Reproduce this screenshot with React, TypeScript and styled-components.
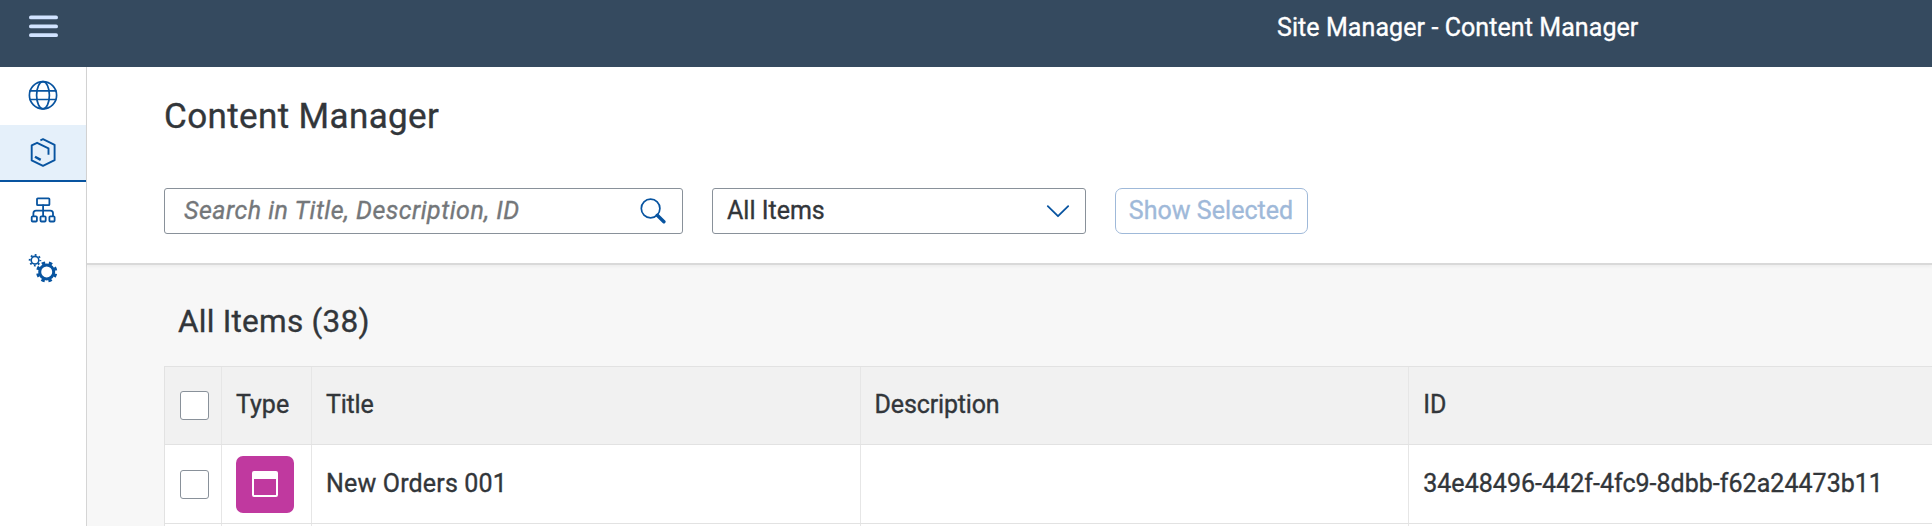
import React from "react";
import styled, { createGlobalStyle } from "styled-components";

const Global = createGlobalStyle`
  * { box-sizing: border-box; }
  body { margin: 0; background: #f7f7f7; font-family: Roboto, "Liberation Sans", sans-serif; color: #32363a; overflow: hidden; }
`;

const Page = styled.div`
  display: flex;
  flex-direction: column;
  height: 526px;
  width: 1932px;
  overflow: hidden;
`;
const Shell = styled.header`
  display: flex;
  align-items: flex-start;
  flex: 0 0 67px;
  background: #354a5f;
  color: #fff;
`;
const MenuButton = styled.button`
  display: flex;
  width: 87px;
  height: 52px;
  padding: 0 0 0 29px;
  align-items: center;
  background: none;
  border: 0;
`;
const Label = styled.span<{ $size?: number; $spacing?: number }>`
  font-size: ${(p) => p.$size ?? 25}px;
  letter-spacing: ${(p) => p.$spacing ?? 0}px;
  line-height: 1.2;
  white-space: nowrap;
  -webkit-text-stroke: 0.35px currentColor;
`;
const ShellTitle = styled.div`
  padding: 13px 0 0 1190px;
  line-height: 30px;
  display: flex;
`;
const Body = styled.div`
  display: flex;
  flex: 1;
  min-height: 0;
`;
const Sidebar = styled.nav`
  flex: 0 0 87px;
  background: #fff;
  border-right: 1px solid #d5d5d5;
`;
const NavItem = styled.a<{ $active?: boolean }>`
  display: flex;
  height: 58px;
  padding: 0 0 2px 28px;
  align-items: center;
  background: ${(p) => (p.$active ? "#e5f0fa" : "#fff")};
  box-shadow: ${(p) => (p.$active ? "inset 0 -2px #0854a0" : "none")};
  &:nth-child(even) { height: 57px; }
`;
const Main = styled.main`
  flex: 1;
  min-width: 0;
  display: flex;
  flex-direction: column;
`;
const PageHeader = styled.section`
  flex: 0 0 198px;
  padding: 29px 0 0 77px;
  background: #fff;
  border-bottom: 2px solid #d9d9d9;
  box-shadow: 0 2px 3px rgba(0, 0, 0, 0.04);
`;
const Heading = styled.h1`
  margin: 0 0 50px;
  height: 42px;
  font-weight: 400;
  display: flex;
`;
const Filters = styled.div`
  display: flex;
  height: 46px;
`;
const Field = styled.div<{ $width: number; $left: number; $right: number }>`
  display: flex;
  align-items: center;
  justify-content: space-between;
  width: ${(p) => p.$width}px;
  margin-right: 29px;
  padding: 0 ${(p) => p.$right}px 0 ${(p) => p.$left}px;
  border: 1px solid #89919a;
  border-radius: 3px;
`;
const Placeholder = styled(Label)`
  font-style: italic;
  color: #74777a;
`;
const ShowButton = styled.button`
  width: 193px;
  padding: 0 1px 0 0;
  font-family: inherit;
  color: #9fb9d9;
  background: #fff;
  border: 1px solid #9fb9d9;
  border-radius: 7px;
`;
const Content = styled.section`
  padding: 38px 0 0 77px;
`;
const TableTitle = styled.h2`
  margin: 0 0 25px;
  padding-left: 14px;
  height: 38px;
  font-weight: 400;
  display: flex;
`;
const Table = styled.div`
  border-top: 1px solid #e2e2e2;
  border-left: 1px solid #e2e2e2;
`;
const Row = styled.div<{ $head?: boolean }>`
  display: grid;
  grid-template-columns: 57px 90px 548.6px 548.6px 1fr;
  height: ${(p) => (p.$head ? 78 : 79)}px;
  background: ${(p) => (p.$head ? "#f1f1f1" : "#fff")};
  border-bottom: 1px solid #e2e2e2;
`;
const Cell = styled.div`
  display: flex;
  align-items: center;
  padding-left: 14px;
  border-right: 1px solid #e6e6e6;
  &:first-child { padding-left: 15px; }
  &:last-child { border-right: 0; }
`;
const HeadCell = styled(Cell)`
  padding-bottom: 2px;
  &:first-child { padding-bottom: 0; }
`;
const Checkbox = styled.span`
  width: 29px;
  height: 29px;
  background: #fff;
  border: 1px solid #89919a;
  border-radius: 3px;
`;
const TypeTile = styled.span`
  display: flex;
  align-items: center;
  justify-content: center;
  width: 58px;
  height: 57px;
  border-radius: 7px;
  background: #c0399f;
`;

const MenuIcon = () => (
  <svg width="29" height="24" viewBox="0 0 29 24" stroke="#d1e3ff" strokeWidth="3.8" strokeLinecap="round">
    <path d="M1.9 3.4h25.2M1.9 12.4h25.2M1.9 21.2h25.2" />
  </svg>
);
const line = { fill: "none", stroke: "#0854a0", strokeWidth: 1.7, strokeLinejoin: "round", strokeLinecap: "round" } as const;
const Globe = () => (
  <svg width="30" height="30" viewBox="0 0 30 30" {...line}>
    <circle cx="15" cy="15.3" r="13.6" />
    <ellipse cx="15" cy="15.3" rx="6.4" ry="13.6" />
    <path d="M2.2 10.8h25.6M2.2 19.5h25.6" />
  </svg>
);
const Hexagon = () => (
  <svg width="30" height="30" viewBox="0 0 30 30" {...line} strokeWidth="1.9" strokeLinecap="butt">
    <path d="M12.4 2.3 15 1.2l11.6 5.6v15.4L15 27.9 3.7 22.4V7.4l5.4-2.6 11.4 5.5v6.4" />
    <path d="m7 18.7 5.7 3.2" strokeWidth="2.4" />
  </svg>
);
const Hierarchy = () => (
  <svg width="30" height="30" viewBox="0 0 30 30" {...line} strokeWidth="1.8">
    <rect x="9" y="3.3" width="12.4" height="6.9" rx=".8" />
    <rect x="3.7" y="21.3" width="5.2" height="5.2" rx="1" />
    <rect x="12.5" y="21.3" width="5.2" height="5.2" rx="1" />
    <rect x="21.4" y="21.3" width="5.2" height="5.2" rx="1" />
    <path d="M15.1 10.2v11.1M5.4 21.2v-3q0-2.6 2.6-2.6h14.4q2.6 0 2.6 2.6v3" />
  </svg>
);
const Gears = () => (
  <svg width="30" height="30" viewBox="0 0 30 30" fill="none" stroke="#0854a0">
    <circle cx="7" cy="7.2" r="3.8" strokeWidth="1.6" />
    <circle cx="7" cy="7.2" r="5.3" strokeWidth="1.9" strokeDasharray="1.8 2.36" strokeDashoffset="0.9" />
    <circle cx="18.7" cy="18.9" r="7" strokeWidth="3" />
    <circle cx="18.7" cy="18.9" r="9.2" strokeWidth="2.8" strokeDasharray="3.5 3.726" strokeDashoffset="-1.9" />
  </svg>
);
const SearchIcon = () => (
  <svg width="26" height="26" viewBox="0 0 26 26" fill="none" stroke="#0854a0" strokeLinecap="round">
    <circle cx="10.6" cy="10.5" r="9.3" strokeWidth="1.7" />
    <path d="m17.3 17.2 6.6 6.6" strokeWidth="3.4" />
  </svg>
);
const Chevron = () => (
  <svg width="24" height="14" viewBox="0 0 24 14" {...line} strokeWidth="1.8">
    <path d="m1.8 2.2 10.2 10 10.2-10" />
  </svg>
);
const WindowIcon = () => (
  <svg width="26" height="26" viewBox="0 0 26 26">
    <rect x="1" y="1" width="24" height="24" rx="1" fill="none" stroke="#fff" strokeWidth="2" />
    <path d="M1 1h24v7H1z" fill="#fff" />
  </svg>
);

export default function App() {
  return (
    <Page>
      <Global />
      <Shell>
        <MenuButton aria-label="Menu"><MenuIcon /></MenuButton>
        <ShellTitle><Label $spacing={0.08}>Site Manager - Content Manager</Label></ShellTitle>
      </Shell>
      <Body>
        <Sidebar>
          <NavItem><Globe /></NavItem>
          <NavItem $active><Hexagon /></NavItem>
          <NavItem><Hierarchy /></NavItem>
          <NavItem><Gears /></NavItem>
        </Sidebar>
        <Main>
          <PageHeader>
            <Heading><Label $size={35} $spacing={0.38}>Content Manager</Label></Heading>
            <Filters>
              <Field $width={519} $left={19} $right={16}>
                <Placeholder $spacing={0.5}>Search in Title, Description, ID</Placeholder>
                <SearchIcon />
              </Field>
              <Field $width={374} $left={14} $right={15}>
                <Label>All Items</Label>
                <Chevron />
              </Field>
              <ShowButton disabled><Label $spacing={0.04}>Show Selected</Label></ShowButton>
            </Filters>
          </PageHeader>
          <Content>
            <TableTitle><Label $size={31.5} $spacing={0.25}>All Items (38)</Label></TableTitle>
            <Table>
              <Row $head>
                <HeadCell><Checkbox /></HeadCell>
                <HeadCell><Label>Type</Label></HeadCell>
                <HeadCell><Label $spacing={-0.2}>Title</Label></HeadCell>
                <HeadCell><Label $spacing={-0.15}>Description</Label></HeadCell>
                <HeadCell><Label>ID</Label></HeadCell>
              </Row>
              <Row>
                <Cell><Checkbox /></Cell>
                <Cell><TypeTile><WindowIcon /></TypeTile></Cell>
                <Cell><Label $spacing={0.17}>New Orders 001</Label></Cell>
                <Cell />
                <Cell><Label $spacing={0.03}>34e48496-442f-4fc9-8dbb-f62a24473b11</Label></Cell>
              </Row>
              <Row><Cell /><Cell /><Cell /><Cell /><Cell /></Row>
            </Table>
          </Content>
        </Main>
      </Body>
    </Page>
  );
}
